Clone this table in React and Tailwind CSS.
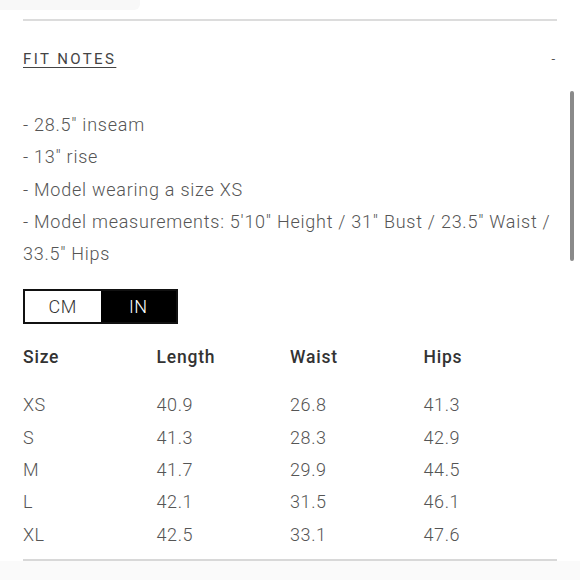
import React from 'react';

const notes = [
  '- 28.5" inseam',
  '- 13" rise',
  '- Model wearing a size XS',
  '- Model measurements: 5\'10" Height / 31" Bust / 23.5" Waist / 33.5" Hips',
];

const rows = [
  ['XS', '40.9', '26.8', '41.3'],
  ['S', '41.3', '28.3', '42.9'],
  ['M', '41.7', '29.9', '44.5'],
  ['L', '42.1', '31.5', '46.1'],
  ['XL', '42.5', '33.1', '47.6'],
];

export default function App() {
  const [unit, setUnit] = React.useState('IN');

  return (
    <div className="relative w-[580px] h-[580px] bg-white overflow-hidden font-['Roboto',sans-serif]">
      {/* faint band from the section above */}
      <div className="h-[10px] w-[140px] bg-[#f8f8f8] rounded-br-md" />

      <div className="px-[23px]">
        <div className="mt-[9px] h-[2px] bg-[#dcdcdc]" />

        {/* Accordion header */}
        <div className="mt-[28px] flex items-center justify-between h-[20px]">
          <span className="text-[15px] leading-[20px] tracking-[0.16em] text-[#444] underline underline-offset-[3px] decoration-[1px]">
            FIT NOTES
          </span>
          <span className="text-[13px] text-[#555] pr-[2px]">-</span>
        </div>

        {/* Notes */}
        <div className="mt-[40px] text-[18px] leading-[32.3px] tracking-[0.75px] text-[#555] font-light">
          {notes.map((n) => (
            <p key={n}>{n}</p>
          ))}
        </div>

        {/* Unit toggle */}
        <div className="mt-[19px] flex w-[155px] h-[35px] border-2 border-[#111]">
          {['CM', 'IN'].map((u) => (
            <button
              key={u}
              onClick={() => setUnit(u)}
              className={`flex-1 flex items-center justify-center text-[18px] tracking-[0.5px] font-light ${
                unit === u ? 'bg-black text-white' : 'bg-white text-[#333]'
              }`}
            >
              {u}
            </button>
          ))}
        </div>

        {/* Size table */}
        <div className="mt-[17px] grid grid-cols-4 text-[17.5px] leading-[32px] tracking-[0.8px] font-medium text-[#333]">
          <span>Size</span>
          <span>Length</span>
          <span>Waist</span>
          <span>Hips</span>
        </div>
        <div className="mt-[16px] text-[18px] leading-[32.3px] tracking-[0.6px] font-light text-[#555]">
          {rows.map((r) => (
            <div key={r[0]} className="grid grid-cols-4">
              {r.map((c, i) => (
                <span key={i}>{c}</span>
              ))}
            </div>
          ))}
        </div>

        <div className="mt-[8px] h-[2px] bg-[#d8d8d8]" />
      </div>
      <div className="h-[30px] bg-[#fafafa]" />

      {/* scrollbar thumb */}
      <div className="absolute left-[570px] top-[91px] w-[4px] h-[170px] rounded-full bg-[#8a8a8a]" />
    </div>
  );
}
